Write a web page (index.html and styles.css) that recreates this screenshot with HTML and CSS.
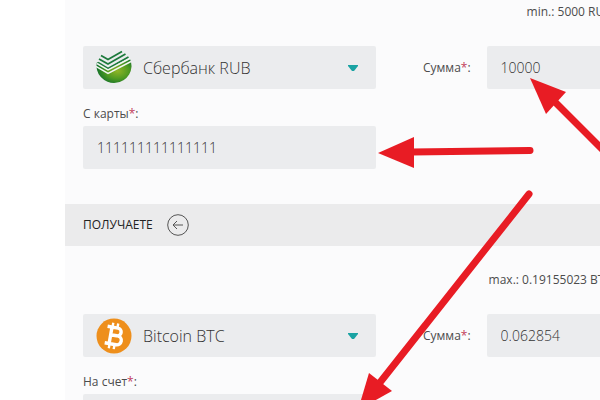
FILE: index.html
```html
<!DOCTYPE html>
<html lang="ru">
	<head>
		<meta charset="UTF-8" />
		<meta name="viewport" content="width=device-width, initial-scale=1.0" />
		<title>Обмен Сбербанк RUB на Bitcoin BTC</title>
		<link rel="stylesheet" href="styles.css">
	</head>
	<body>
		<form class="exchange">
			<section class="block">
				<p class="limit">min.: 5000 RUB</p>
				<div class="row">
					<div class="currency">
						<svg class="logo" viewBox="0 0 36 36" aria-hidden="true">
							<defs>
								<radialGradient id="ball" cx="0.6" cy="0.5" r="0.6">
									<stop offset="0" stop-color="#8fb526" />
									<stop offset="0.55" stop-color="#4f9a22" />
									<stop offset="1" stop-color="#12702a" />
								</radialGradient>
							</defs>
							<path d="M1 12L12 19L34 9A17.500 17 0 1 1 1 12Z" fill="url(#ball)" />
							<g fill="none" stroke="#1d7a3c" stroke-width="1.800">
								<path d="M5 5.500L12 9.500L26 1.500" />
								<path d="M3 9L12 14L29.500 4" />
								<path d="M2 12.500L12 18.500L32.500 7" />
							</g>
							<g fill="none" stroke="#f2f6f2" stroke-width="1.500">
								<path d="M1 13.500L12 20L34 8.500" />
								<path d="M0 16.500L12 23.500L35 11.500" />
							</g>
						</svg>
						<select class="field" name="from" aria-label="Отдаете">
							<option>Сбербанк RUB</option>
						</select>
						<svg class="caret" viewBox="0 0 10 6" aria-hidden="true"><path d="M0 0h10v1L6 6H4L0 1z" /></svg>
					</div>
					<div class="amount">
						<label for="sumFrom">Сумма<span class="req">*</span>:</label>
						<input class="field" type="text" id="sumFrom" name="sumFrom" value="10000" />
					</div>
				</div>
				<div class="account">
					<label for="card">С карты<span class="req">*</span>:</label>
					<input class="field" type="text" id="card" name="card" value="111111111111111" />
				</div>
			</section>

			<div class="band">
				<h2>ПОЛУЧАЕТЕ</h2>
				<button class="swap" type="button" aria-label="Поменять">
					<svg viewBox="0 0 22 22" aria-hidden="true">
						<circle cx="11" cy="11" r="10.300" />
						<path d="M16 11H6M10 7L6 11L10 15" />
					</svg>
				</button>
			</div>

			<section class="block">
				<p class="limit">max.: 0.19155023 BTC</p>
				<div class="row">
					<div class="currency">
						<svg class="logo" viewBox="0 0 36 36" aria-hidden="true">
							<circle cx="18" cy="18" r="17.500" fill="#ee8f1c" />
							<g transform="rotate(10 18 18)" fill="none" stroke="#fff">
								<path d="M10 9.500H20.500a3.900 3.900 0 0 1 0 7.800H14.500M20.500 17.300H21.500a4.500 4.500 0 0 1 0 9H10M14.500 9.500V26.300" stroke-width="3.400" />
								<path d="M15 5V10M20 5V10M15 26V31M20 26V31" stroke-width="2.400" />
							</g>
						</svg>
						<select class="field" name="to" aria-label="Получаете">
							<option>Bitcoin BTC</option>
						</select>
						<svg class="caret" viewBox="0 0 10 6" aria-hidden="true"><path d="M0 0h10v1L6 6H4L0 1z" /></svg>
					</div>
					<div class="amount">
						<label for="sumTo">Сумма<span class="req">*</span>:</label>
						<input class="field" type="text" id="sumTo" name="sumTo" value="0.062854" />
					</div>
				</div>
				<div class="account">
					<label for="wallet">На счет<span class="req">*</span>:</label>
					<input class="field" type="text" id="wallet" name="wallet" />
				</div>
			</section>
		</form>

		<svg class="arrows" viewBox="0 0 600 400" aria-hidden="true">
			<path class="shaft" d="M412 152L530 150.500" />
			<path class="head" d="M378 153L414 137V168Z" />
			<path class="shaft" d="M556 103L606 153" />
			<path class="head" d="M530 78L566 92L546 114Z" />
			<path class="shaft" d="M378 385L529 194" />
			<path class="head" d="M358 410L369 373L392 391Z" />
		</svg>
	</body>
</html>
```

FILE: styles.css
```css
* {
	box-sizing: border-box;
}
body {
	font-family: "Open Sans", sans-serif;
	font-size: 12px;
	line-height: 16px;
	color: #4c4c4c;
	background-color: #fff;
	margin: 0;
	position: relative;
	height: 100vh;
	overflow: hidden;
}
.exchange {
	margin-left: 65px;
	margin-right: -12px;
	background-color: #fbfbfc;
}
.block {
	padding: 4px 0 35px 18px;
}
.limit {
	margin: 0 0 26px;
	text-align: right;
}
.row {
	display: grid;
	grid-template-columns: 293px 1fr;
	gap: 47px;
}
.currency {
	display: grid;
	grid-template-columns: 60px 1fr 28px;
	align-items: center;
}
.currency > * {
	grid-row: 1;
	z-index: 1;
}
.currency .field {
	grid-column: 1 / -1;
	padding-left: 60px;
	appearance: none;
	z-index: 0;
}
.logo {
	grid-column: 1;
	width: 36px;
	height: 36px;
	margin-left: 13px;
	pointer-events: none;
}
.caret {
	grid-column: 3;
	width: 10px;
	height: 6px;
	fill: #1aa3a3;
	pointer-events: none;
}
.field {
	width: 100%;
	height: 43px;
	padding: 0 14px;
	border: none;
	border-radius: 2px;
	background-color: #ebecee;
	font-family: inherit;
	font-size: 16px;
	font-weight: 300;
	color: #333;
}
.amount {
	display: flex;
	align-items: center;
	gap: 16px;
}
.amount label {
	flex: none;
}
.amount .field {
	flex: 1;
	min-width: 0;
	font-size: 14px;
}
.account {
	width: 293px;
	margin-top: 17px;
}
.account label {
	display: block;
	margin-bottom: 4px;
}
.account .field {
	display: block;
	font-size: 14px;
}
.req {
	color: #c2405c;
}
.band {
	display: flex;
	align-items: center;
	gap: 14px;
	height: 42px;
	padding-left: 18px;
	background-color: #ebebec;
}
.band h2 {
	margin: 0;
	font-size: 12px;
	font-weight: 400;
	color: #222;
}
.band + .block {
	padding-top: 26px;
}
.swap {
	width: 22px;
	height: 22px;
	padding: 0;
	border: none;
	background: none;
	cursor: pointer;
}
.swap svg {
	display: block;
	fill: none;
	stroke: #555;
}
.arrows {
	position: absolute;
	top: 0;
	left: 0;
	width: 600px;
	height: 400px;
	pointer-events: none;
}
.shaft {
	fill: none;
	stroke: #e81c24;
	stroke-width: 7;
	stroke-linecap: round;
}
.head {
	fill: #e81c24;
}
```
